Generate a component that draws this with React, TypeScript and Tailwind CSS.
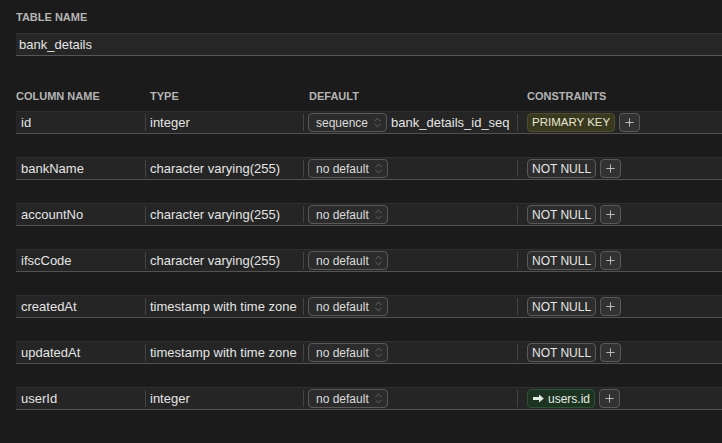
import { ChevronsUpDown, Plus } from "lucide-react";

type Col = {
  name: string;
  type: string;
  def: string;
  seq?: string;
  constraint: "pk" | "nn" | "fk";
};

const columns: Col[] = [
  { name: "id", type: "integer", def: "sequence", seq: "bank_details_id_seq", constraint: "pk" },
  { name: "bankName", type: "character varying(255)", def: "no default", constraint: "nn" },
  { name: "accountNo", type: "character varying(255)", def: "no default", constraint: "nn" },
  { name: "ifscCode", type: "character varying(255)", def: "no default", constraint: "nn" },
  { name: "createdAt", type: "timestamp with time zone", def: "no default", constraint: "nn" },
  { name: "updatedAt", type: "timestamp with time zone", def: "no default", constraint: "nn" },
  { name: "userId", type: "integer", def: "no default", constraint: "fk" },
];

function Sep() {
  return <div className="w-px h-[17px] bg-[#444444] shrink-0" />;
}

function Badge({ kind }: { kind: Col["constraint"] }) {
  if (kind === "pk")
    return (
      <span className="h-[19px] px-[4px] flex items-center rounded-[4px] border border-[#4d4d30] bg-[#39391f] text-[11.5px] text-[#e6e6d2]">
        PRIMARY KEY
      </span>
    );
  if (kind === "fk")
    return (
      <span className="h-[19px] pl-[5px] pr-[4px] flex items-center gap-[4px] rounded-[4px] border border-[#2c5233] bg-[#1d3321] text-[#e2ece3]">
        <svg width="11" height="9" viewBox="0 0 11 9" fill="currentColor">
          <path d="M0 3.1h6V0.4L10.8 4.5 6 8.6V5.9H0z" />
        </svg>
        users.id
      </span>
    );
  return (
    <span className="h-[19px] px-[4px] flex items-center rounded-[4px] border border-[#595959] bg-[#2d2d2d] text-[#e6e6e6]">
      NOT NULL
    </span>
  );
}

export default function App() {
  return (
    <div
      className="w-[722px] h-[443px] overflow-hidden bg-[#1b1b1b] pt-[10px] pl-[16px] text-[13px] text-[#e4e4e4]"
      style={{ fontFamily: '"Liberation Sans", Arial, sans-serif' }}
    >
      <div className="h-[14px] leading-[14px] text-[11px] font-bold text-[#b4b4b4]">TABLE NAME</div>
      <div className="mt-[9px] h-[23px] flex items-center pl-[3px] pt-px bg-[#262626] border-t border-[#333333] border-b border-b-[#555555]">
        bank_details
      </div>

      <div className="mt-[33px] h-[14px] leading-[14px] flex text-[11px] font-bold text-[#b4b4b4]">
        <div className="w-[134px]">COLUMN NAME</div>
        <div className="w-[159px]">TYPE</div>
        <div className="w-[218px]">DEFAULT</div>
        <div>CONSTRAINTS</div>
      </div>

      <div className="mt-[8px] flex flex-col gap-[23px]">
        {columns.map((c) => (
          <div
            key={c.name}
            className="h-[23px] flex items-center bg-[#252525] border-t border-[#303030] border-b border-b-[#525252]"
          >
            <div className="w-[129px] pl-[5px] pt-px shrink-0">{c.name}</div>
            <Sep />
            <div className="w-[157px] pl-[4px] pt-px shrink-0">{c.type}</div>
            <Sep />
            <div className="w-[213px] pl-[4px] shrink-0 flex items-center gap-[4px]">
              <span className="h-[19px] pl-[7px] pr-[2px] flex items-center gap-[3px] rounded-[4px] border border-[#595959] bg-[#2b2b2b] text-[12px] text-[#dcdcdc]">
                {c.def}
                <ChevronsUpDown size={13} strokeWidth={1.1} className="text-[#8a8a8a]" />
              </span>
              {c.seq && <span className="pt-px">{c.seq}</span>}
            </div>
            <Sep />
            <div className="pl-[9px] flex items-center gap-[4px] text-[12px]">
              <Badge kind={c.constraint} />
              <span className="w-[21px] h-[19px] flex items-center justify-center rounded-[4px] border border-[#595959] bg-[#323232] text-[#d4d4d4]">
                <Plus size={13} strokeWidth={1.5} />
              </span>
            </div>
          </div>
        ))}
      </div>
    </div>
  );
}
